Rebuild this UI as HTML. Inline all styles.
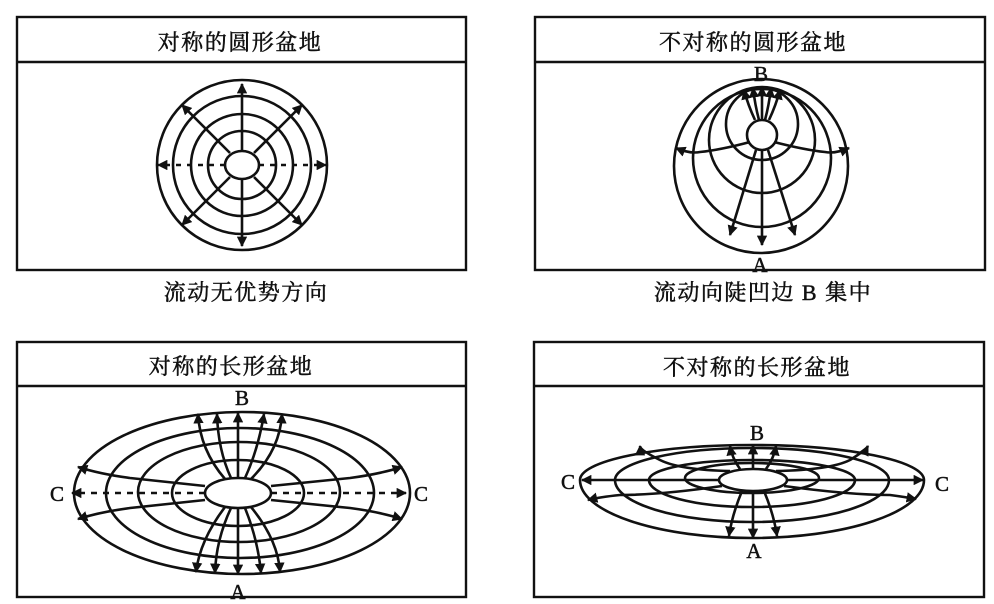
<!DOCTYPE html>
<html><head><meta charset="utf-8"><style>
html,body{margin:0;padding:0;background:#fff;width:994px;height:604px;overflow:hidden}
svg{display:block}
text{font-family:"Liberation Serif","Noto Serif CJK SC","Noto Sans CJK SC",serif;fill:#111;stroke:#111;stroke-width:0.5}
</style></head><body>
<svg width="994" height="604" viewBox="0 0 994 604" xmlns="http://www.w3.org/2000/svg">
<defs>
<marker id="a" viewBox="0 0 10 10" refX="9" refY="5" markerWidth="4" markerHeight="4" orient="auto"><path d="M0,0L10,5L0,10z" fill="#111"/></marker>
</defs>
<g fill="none" stroke="#111" stroke-width="2.4">
<rect x="17" y="17" width="449" height="253"/><line x1="17" y1="62" x2="466" y2="62"/>
<rect x="535" y="17" width="450" height="253"/><line x1="535" y1="62" x2="985" y2="62"/>
<rect x="17" y="342" width="449" height="255"/><line x1="17" y1="386" x2="466" y2="386"/>
<rect x="534" y="342" width="450" height="255"/><line x1="534" y1="386" x2="984" y2="386"/>
</g>
<g font-size="22" text-anchor="middle" letter-spacing="1.5">
<text x="240" y="50">对称的圆形盆地</text>
<text x="753" y="50">不对称的圆形盆地</text>
<text x="231" y="374">对称的长形盆地</text>
<text x="757" y="375">不对称的长形盆地</text>
<text x="246" y="300">流动无优势方向</text>
<text x="763" y="300">流动向陡凹边 B 集中</text>
</g>
<g font-size="21" text-anchor="middle">
<text x="242" y="405">B</text>
<text x="238" y="599">A</text>
<text x="57" y="501">C</text>
<text x="421" y="501">C</text>
<text x="761" y="81">B</text>
<text x="760" y="272">A</text>
<text x="757" y="440">B</text>
<text x="754" y="558">A</text>
<text x="568" y="489">C</text>
<text x="942" y="491">C</text>
</g>
<g fill="none" stroke="#111" stroke-width="2.6">
<circle cx="242" cy="165" r="85"/><circle cx="242" cy="165" r="69"/><circle cx="242" cy="165" r="51"/><circle cx="242" cy="165" r="34"/>
<ellipse cx="242" cy="165" rx="17" ry="14"/>
<line x1="242" y1="151" x2="242" y2="84" marker-end="url(#a)"/>
<line x1="242" y1="179" x2="242" y2="246" marker-end="url(#a)"/>
<line x1="254" y1="153" x2="302" y2="105" marker-end="url(#a)"/>
<line x1="230" y1="153" x2="182" y2="105" marker-end="url(#a)"/>
<line x1="254" y1="177" x2="302" y2="225" marker-end="url(#a)"/>
<line x1="230" y1="177" x2="182" y2="225" marker-end="url(#a)"/>
<line x1="259" y1="165" x2="326" y2="165" stroke-dasharray="5,6" marker-end="url(#a)"/>
<line x1="225" y1="165" x2="158" y2="165" stroke-dasharray="5,6" marker-end="url(#a)"/>
<circle cx="761" cy="166" r="87"/>
<circle cx="762" cy="158" r="69"/>
<circle cx="762" cy="140" r="53"/>
<circle cx="762" cy="124" r="36"/>
<circle cx="762" cy="135" r="15"/>
<path d="M756,150 L730,235" marker-end="url(#a)"/>
<path d="M762,150 L762,245" marker-end="url(#a)"/>
<path d="M768,150 L795,235" marker-end="url(#a)"/>
<path d="M755,120 Q748,105 744,90" marker-end="url(#a)"/>
<path d="M759,120 Q755,105 753,88" marker-end="url(#a)"/>
<path d="M762,120 L762,87" marker-end="url(#a)"/>
<path d="M765,120 Q769,105 771,88" marker-end="url(#a)"/>
<path d="M769,120 Q776,105 780,90" marker-end="url(#a)"/>
<path d="M750,142 Q720,150 700,152 Q690,154 676,148" marker-end="url(#a)"/>
<path d="M774,142 Q805,150 825,152 Q835,154 849,148" marker-end="url(#a)"/>
<ellipse cx="242" cy="493" rx="168" ry="81"/>
<ellipse cx="240" cy="493" rx="134" ry="65"/>
<ellipse cx="239" cy="492" rx="101" ry="50"/>
<ellipse cx="238" cy="493" rx="66" ry="33"/>
<ellipse cx="238" cy="493" rx="33" ry="15"/>
<path d="M225,479 Q200,450 198,414" marker-end="url(#a)"/>
<path d="M231,478 Q218,450 217,414" marker-end="url(#a)"/>
<path d="M238,478 L238,413" marker-end="url(#a)"/>
<path d="M245,478 Q258,450 264,414" marker-end="url(#a)"/>
<path d="M251,479 Q280,450 282,414" marker-end="url(#a)"/>
<path d="M225,507 Q200,540 196,572" marker-end="url(#a)"/>
<path d="M231,508 Q216,540 215,573" marker-end="url(#a)"/>
<path d="M238,508 L238,574" marker-end="url(#a)"/>
<path d="M245,508 Q258,540 261,573" marker-end="url(#a)"/>
<path d="M251,507 Q278,540 280,572" marker-end="url(#a)"/>
<path d="M205,486 Q150,480 130,478 Q100,474 78,467" marker-end="url(#a)"/>
<path d="M205,500 Q150,506 130,508 Q100,512 78,519" marker-end="url(#a)"/>
<path d="M271,486 Q330,480 350,478 Q380,474 402,467" marker-end="url(#a)"/>
<path d="M271,500 Q330,506 350,508 Q380,512 402,519" marker-end="url(#a)"/>
<line x1="205" y1="493" x2="72" y2="493" stroke-dasharray="6,6" marker-end="url(#a)"/>
<line x1="271" y1="493" x2="406" y2="493" stroke-dasharray="6,6" marker-end="url(#a)"/>
<path d="M580,480 A172,35 0 0 1 924,480 A172,58 0 0 1 580,480z"/>
<path d="M615,480 A137,32 0 0 1 889,480 A137,42 0 0 1 615,480z"/>
<path d="M649,480 A103,20 0 0 1 855,480 A103,27 0 0 1 649,480z"/>
<path d="M685,478 A67,15 0 0 1 819,478 A67,15 0 0 1 685,478z"/>
<ellipse cx="753" cy="480" rx="34" ry="11"/>
<line x1="719" y1="480" x2="582" y2="480" marker-end="url(#a)"/>
<line x1="787" y1="480" x2="923" y2="480" marker-end="url(#a)"/>
<path d="M730,471 Q680,470 660,460 Q640,450 640,446" marker-end="url(#a)"/>
<path d="M776,471 Q830,470 850,460 Q866,450 868,446" marker-end="url(#a)"/>
<path d="M740,469 Q732,458 730,446" marker-end="url(#a)"/>
<path d="M753,469 L753,445" marker-end="url(#a)"/>
<path d="M766,469 Q774,458 776,446" marker-end="url(#a)"/>
<path d="M742,491 Q732,515 729,536" marker-end="url(#a)"/>
<path d="M753,491 L753,538" marker-end="url(#a)"/>
<path d="M764,491 Q774,515 777,536" marker-end="url(#a)"/>
<path d="M722,486 Q660,495 620,495 Q600,497 588,500" marker-end="url(#a)"/>
<path d="M784,486 Q850,495 890,495 Q905,497 916,499" marker-end="url(#a)"/>
</g>
</svg>
</body></html>
